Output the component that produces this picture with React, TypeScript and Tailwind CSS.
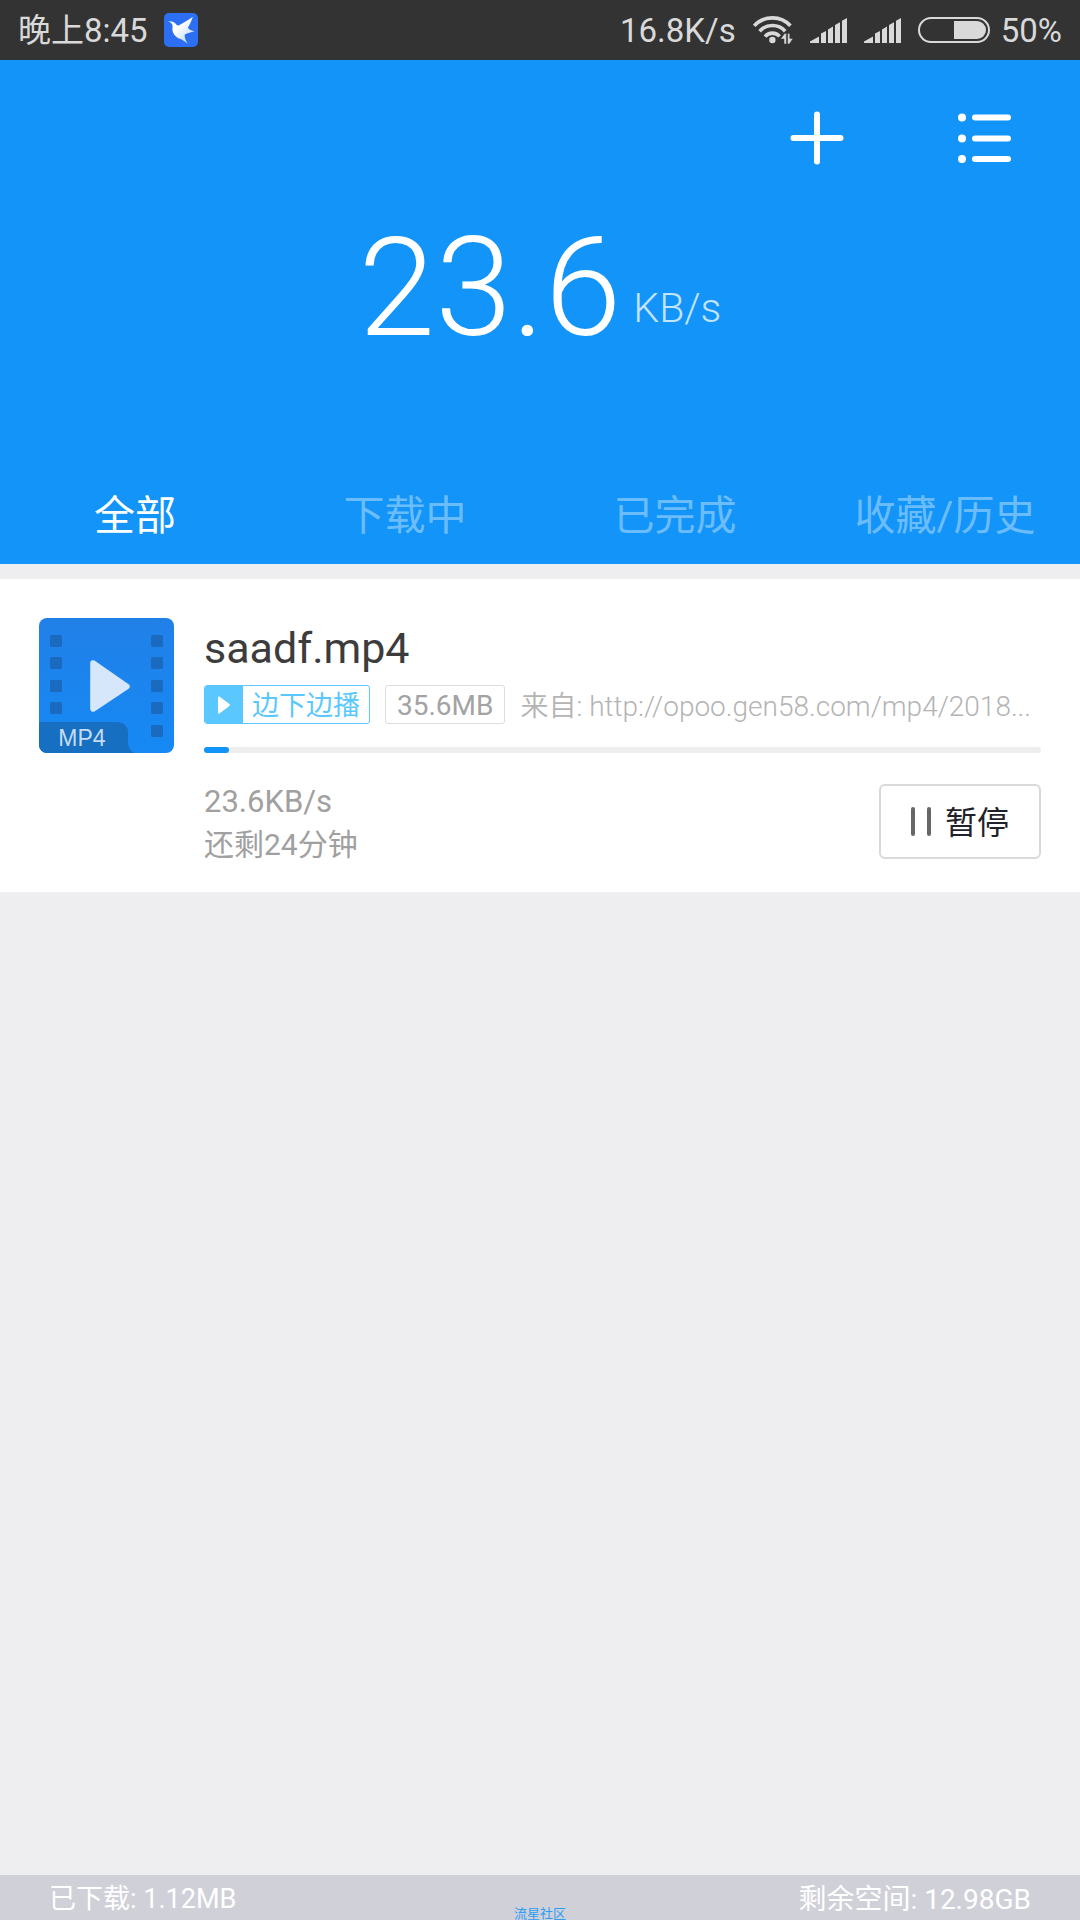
import React from "react";

const tabs = ["全部", "下载中", "已完成", "收藏/历史"];

function BirdIcon() {
  return (
    <svg viewBox="0 0 34 34" className="size-[34px]" aria-hidden="true">
      <defs>
        <linearGradient id="bird" x1="0" y1="0" x2="1" y2="1">
          <stop offset="0.4" stopColor="#ffffff" />
          <stop offset="1" stopColor="#a9cdf8" />
        </linearGradient>
      </defs>
      <rect width="34" height="34" rx="5" fill="#2c6ff2" />
      <path
        d="M4 8.2 L6.6 8.6 C8 8.2 10 9 11.5 10.5 C12.6 12 13.6 12.8 15 12.2 C19 10.5 24 7 28.8 3.8 C27.6 8 25.6 12 24 14.6 C24.6 16.2 26.4 17.6 30.6 18.2 C26.8 19.2 23.6 20.2 20.8 21.4 C20.2 24.4 21.6 27.4 24 31 C21 28.6 18.6 26.8 16.6 26 C11.8 24.4 8.6 20.6 8.4 16.4 C8.4 14.6 8.8 13.2 8.4 12 C7.8 10.2 6.4 9 4 8.2 Z"
        fill="url(#bird)"
      />
    </svg>
  );
}

function WifiIcon() {
  return (
    <svg viewBox="0 0 40 30" className="h-[30px] w-10" fill="none" stroke="#d9d9d9" strokeWidth="3.6" aria-hidden="true">
      <path d="M1.2 10.8 C11 0.2 28 0.2 37.4 10.8" />
      <path d="M6.6 16.2 C13.4 8.6 25.4 8.6 32.2 16.2" />
      <path d="M12 21.6 C16 17 22.8 17 26.6 21.4" />
      <circle cx="19.4" cy="25" r="3.2" fill="#d9d9d9" stroke="none" />
      <path d="M27.6 24 L31.6 18.4 H33.4 V29 H31 V24 Z M34.6 18.4 H36.8 V23.4 H40 L36.4 29 H34.6 Z" fill="#d9d9d9" stroke="#333333" strokeWidth="0.5" />
    </svg>
  );
}

function SignalIcon() {
  return (
    <svg viewBox="0 0 37 25" className="h-[25px] w-[37px]" fill="#d9d9d9" aria-hidden="true">
      <path d="M0 25 V23.6 L9 18.4 V25 Z" />
      <path d="M11 25 V15.6 L16 13 V25 Z" />
      <path d="M18 25 V11.4 L23 8.6 V25 Z" />
      <path d="M25 25 V7 L30 4.2 V25 Z" />
      <path d="M32 25 V2.8 L37 0 V25 Z" />
    </svg>
  );
}

function BatteryIcon() {
  return (
    <svg viewBox="0 0 72 26" className="h-[26px] w-[72px]" aria-hidden="true">
      <rect x="1" y="1" width="70" height="24" rx="12" fill="none" stroke="#d9d9d9" strokeWidth="2" />
      <path d="M36 4 H59 A9 9 0 0 1 59 22 H36 Z" fill="#d9d9d9" />
    </svg>
  );
}

function VideoIcon() {
  return (
    <svg viewBox="0 0 135 135" className="size-[135px] shrink-0" role="img" aria-label="MP4">
      <defs>
        <linearGradient id="tile" x1="0" y1="0" x2="0" y2="1">
          <stop offset="0" stopColor="#2180e8" />
          <stop offset="1" stopColor="#1689f4" />
        </linearGradient>
        <clipPath id="tileClip">
          <rect width="135" height="135" rx="8" />
        </clipPath>
      </defs>
      <g clipPath="url(#tileClip)">
        <rect width="135" height="135" fill="url(#tile)" />
        {[17, 39, 62, 84].map((y) => (
          <rect key={y} x="11" y={y} width="12" height="12" rx="1.5" fill="#1a6bbf" />
        ))}
        {[17, 39, 62, 84, 107].map((y) => (
          <rect key={y} x="112" y={y} width="12" height="12" rx="1.5" fill="#1a6bbf" />
        ))}
        <path d="M55.5 42.6 L89.6 66.2 Q92.2 68.5 89.6 70.8 L55.5 93.4 Q51.6 95 51.2 91 V45 Q51.6 41 55.5 42.6 Z" fill="#d6e7fc" />
        <path d="M0 104 H79 Q89 105 89 115 V124 Q89 133 96 135 H0 Z" fill="#176fc1" />
        <text x="43" y="128" textAnchor="middle" fontSize="23" fill="#c5dcf4" fontFamily="Liberation Sans, sans-serif">
          MP4
        </text>
      </g>
    </svg>
  );
}

export default function App() {
  return (
    <div className="flex min-h-screen flex-col bg-[#eeeef0] font-['Roboto','Noto_Sans_CJK_SC',sans-serif] font-normal">
      <div className="flex h-[60px] items-center justify-between bg-[#333333] px-[18px] text-[33px] text-[#d9d9d9]">
        <div className="flex items-center gap-4">
          <span className="pt-[2px]">晚上8:45</span>
          <BirdIcon />
        </div>
        <div className="flex items-center gap-[17px]">
          <span className="pt-[2px]">16.8K/s</span>
          <WifiIcon />
          <SignalIcon />
          <SignalIcon />
          <div className="flex items-center gap-[11px]">
            <BatteryIcon />
            <span className="pt-[2px]">50%</span>
          </div>
        </div>
      </div>

      <header className="bg-[#1294f8] text-white">
        <div className="flex justify-end gap-[114px] pt-[51px] pr-[68px]">
          <button type="button" aria-label="新建">
            <svg viewBox="0 0 54 54" className="size-[54px]" stroke="#fff" strokeWidth="6" strokeLinecap="round">
              <path d="M27 3.5 V50.5 M3.5 27 H50.5" />
            </svg>
          </button>
          <button type="button" aria-label="列表">
            <svg viewBox="0 0 54 54" className="size-[54px]" stroke="#fff" strokeWidth="6" strokeLinecap="round">
              <path d="M17 6.5 H50 M17 27.5 H50 M17 48 H50" />
              <path d="M4 6.5 h.01 M4 27.5 h.01 M4 48 h.01" strokeWidth="8" />
            </svg>
          </button>
        </div>
        <div className="flex h-[230px] items-center justify-center gap-3 pt-4">
          <span className="text-[138px] leading-none font-light">23.6</span>
          <span className="pt-10 text-[41px] leading-none font-light text-white/75">KB/s</span>
        </div>
        <nav className="mt-[69px] grid h-[100px] grid-cols-4" role="tablist">
          {tabs.map((tab, i) => (
            <button
              key={tab}
              type="button"
              role="tab"
              aria-selected={i === 0}
              className={
                i === 0
                  ? "pt-[5px] text-[41px] whitespace-nowrap text-white"
                  : "pt-[5px] text-[41px] whitespace-nowrap text-white/40"
              }
            >
              {tab}
            </button>
          ))}
        </nav>
      </header>

      <main className="flex-1 pt-[15px]">
        <article className="flex gap-[30px] bg-white px-[39px] pt-[39px] pb-[26px]">
          <VideoIcon />
          <div className="min-w-0 flex-1">
            <h2 className="h-[67px] text-[43px] leading-[60px] text-[#3c3c3c]">saadf.mp4</h2>
            <div className="flex h-[39px] items-center">
              <button
                type="button"
                className="flex h-[39px] shrink-0 items-center overflow-hidden rounded-[3px] border border-[#5ac8fe] bg-white text-[27px] leading-none whitespace-nowrap text-[#5ac8fe]"
              >
                <span className="flex h-[39px] w-[38px] items-center justify-center bg-[#5ac8fe]">
                  <svg viewBox="0 0 12 18" className="h-[18px] w-3" fill="#fff" aria-hidden="true">
                    <path d="M0 1 Q0.4 0 1.4 0.6 L11.4 8 Q12.4 9 11.4 10 L1.4 17.4 Q0.4 18 0 17 Z" />
                  </svg>
                </span>
                <span className="px-[9px] pt-1">边下边播</span>
              </button>
              <span className="ml-[15px] flex h-[39px] shrink-0 items-center rounded-[3px] border border-[#dddddd] px-[11px] pt-[3px] text-[28px] leading-none text-[#a3a3a3]">
                35.6MB
              </span>
              <span className="ml-[15px] pt-[3px] text-[28px] leading-[39px] font-[350] whitespace-nowrap text-[#b4b4b4]">
                来自: http://opoo.gen58.com/mp4/2018...
              </span>
            </div>
            <div
              role="progressbar"
              aria-label="下载进度"
              aria-valuenow={3}
              aria-valuemin={0}
              aria-valuemax={100}
              className="mt-[23px] h-[6px] rounded-full bg-[#eeeeee]"
            >
              <div className="h-full w-[3%] rounded-full bg-[#1294f8]" />
            </div>
            <div className="mt-[25px] flex items-start justify-between">
              <div className="pt-[2px] text-[31px] leading-[43px] text-[#a0a0a0]">
                <p>23.6KB/s</p>
                <p className="text-[30px]">还剩24分钟</p>
              </div>
              <button
                type="button"
                className="mt-[6px] flex h-[75px] w-[162px] items-center justify-center gap-[14px] rounded-md border-2 border-[#d9d9d9] bg-white text-[32px] text-[#1f2329]"
              >
                <svg viewBox="0 0 20 29" className="h-[29px] w-5" fill="#666666" aria-hidden="true">
                  <rect width="4" height="29" rx="2" />
                  <rect x="16" width="4" height="29" rx="2" />
                </svg>
                <span className="pt-[2px]">暂停</span>
              </button>
            </div>
          </div>
        </article>
      </main>

      <footer className="relative flex h-[45px] items-center justify-between bg-[#d0d0d9] px-[49px] pt-1 text-[27px] text-white">
        <span>已下载: 1.12MB</span>
        <span className="text-[28px]">剩余空间: 12.98GB</span>
        <span className="absolute inset-x-0 bottom-0 text-center text-[13px] leading-[12px] text-[#2f9cf4]">
          流星社区
        </span>
      </footer>
    </div>
  );
}
